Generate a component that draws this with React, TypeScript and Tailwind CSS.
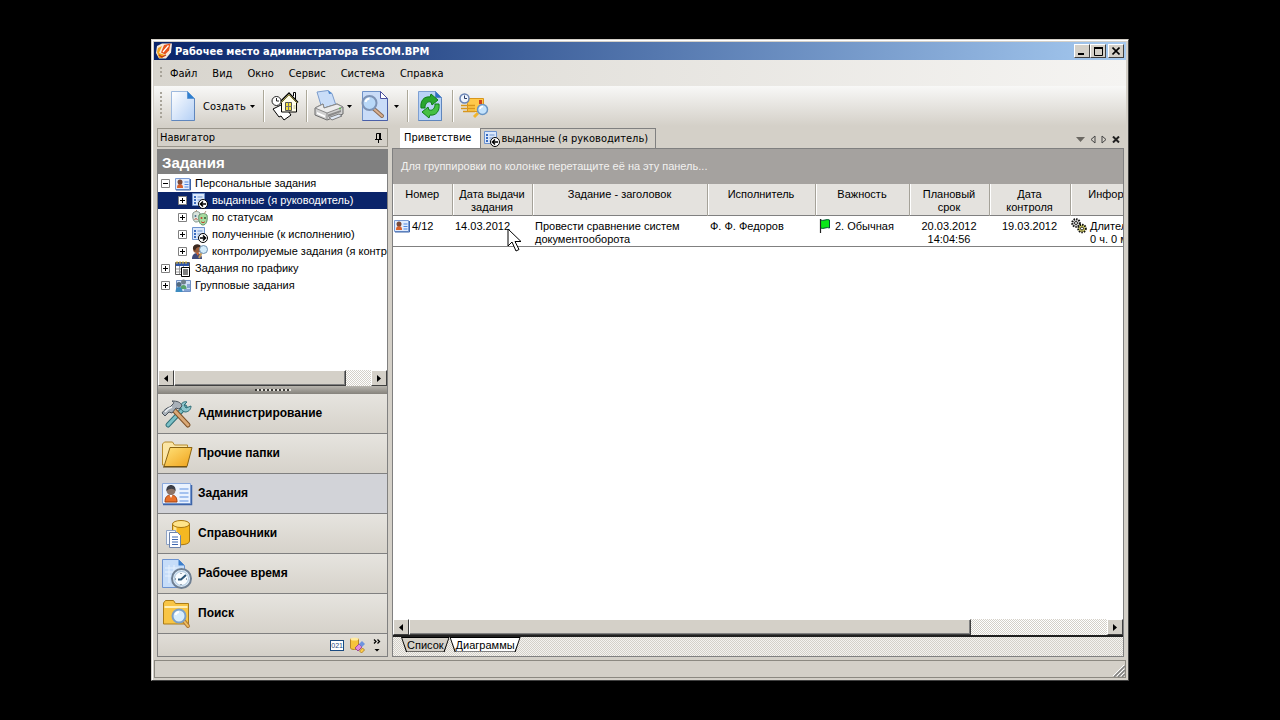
import type { ReactNode } from 'react';

interface IconProps {
  className?: string;
}

const SansText = 'font-["Liberation_Sans",Arial,sans-serif]';

/* ---------- Toolbar icons ---------- */

const AppLogo: React.FC<IconProps> = ({ className }) => (
  <svg className={className} viewBox="0 0 16 16" aria-hidden="true">
    <path d="M1 3l5-2.500h10l-1 9-5 6H3L0 10z" fill="#f7e9dc" />
    <path d="M8 2l6.500-1.500-1.500 7-4 4-4-2z" fill="#e8541c" />
    <path d="M2 5l4-2-3 7 6 2-3 3H3L1 9z" fill="#f2a21c" />
    <path d="M12.500 2.500L7 9" stroke="#fff" strokeWidth="1.200" />
    <path d="M3 12l3 2 4-2" stroke="#c8370f" fill="none" strokeWidth="1.200" />
  </svg>
);

const NewPageIcon: React.FC<IconProps> = ({ className }) => (
  <svg className={className} viewBox="0 0 32 32" aria-hidden="true">
    <defs>
      <linearGradient id="page" x1="0" y1="0" x2="1" y2="1">
        <stop offset="0" stopColor="#ffffff" />
        <stop offset="1" stopColor="#b3cff5" />
      </linearGradient>
    </defs>
    <path d="M4.500 1.500h16l7 7v22h-23z" fill="url(#page)" stroke="#9db9de" />
    <path d="M20.500 1.500v7h7z" fill="#2f7fd0" stroke="#5d97d4" />
    <path d="M4.500 30.500h23v-22" fill="none" stroke="#5f86bd" />
  </svg>
);

const HomeIcon: React.FC<IconProps> = ({ className }) => (
  <svg className={className} viewBox="0 0 28 30" aria-hidden="true">
    <path d="M2 18l10-5 8 11-7 5-3-4-2 1z" fill="#fff" stroke="#000" />
    <path d="M10.500 11.500v9.500h15v-9.500L18 4z" fill="#fffdea" stroke="#000" />
    <path d="M22.500 5V1.500h2V8" fill="#fff" stroke="#000" />
    <path d="M8.500 11.500L18 2l9 9.500" fill="none" stroke="#000" strokeWidth="1.500" />
    <path d="M9.500 12L18 3.800l8.500 8.200" fill="none" stroke="#e8dc5c" strokeWidth="0.800" />
    <path d="M14.500 11.500h6v8h-6z" fill="#f4e13c" stroke="#555" />
    <path d="M17.500 11.500v8M14.500 15.500h6" stroke="#777" />
    <path d="M22.500 14h2v4h-2z" fill="#d8d8b0" />
    <circle cx="5.500" cy="10" r="4.500" fill="#fff" stroke="#222" />
    <path d="M5.500 7v3h2.500" fill="none" stroke="#222" />
  </svg>
);

const PrinterIcon: React.FC<IconProps> = ({ className }) => (
  <svg className={className} viewBox="0 0 32 32" aria-hidden="true">
    <path d="M4 2l11-1.500 4 3 4 12-14 3z" fill="#c9ddf8" stroke="#7c9ccb" />
    <path d="M15 0.500l1 3.500 3-0.500z" fill="#4b87cf" />
    <path d="M2 18l8-4 1 4 13-4 6 3v7l-16 6-12-5z" fill="#d0d0d0" stroke="#6a6a6a" />
    <path d="M2 18l12 5 16-6-6-3-13 4-1-4z" fill="#ececec" stroke="#8a8a8a" />
    <path d="M14 23v7" stroke="#888" />
    <path d="M15 24.500l13-4.500v2l-13 5z" fill="#8b8b8b" />
    <path d="M16 27.500l10-3.500 3 2-10 4z" fill="#dfe8f4" stroke="#7d7d7d" />
    <path d="M4 22l8 3.500v2l-8-3.500z" fill="#fff" />
    <circle cx="27" cy="18.500" r="1" fill="#59b84a" />
  </svg>
);

const PreviewIcon: React.FC<IconProps> = ({ className }) => (
  <svg className={className} viewBox="0 0 32 32" aria-hidden="true">
    <path d="M4.500 1.500h18l7 7v22h-25z" fill="#c9dcf8" stroke="#6f92c8" />
    <path d="M22.500 1.500v7h7z" fill="#fff" stroke="#4a4f9e" />
    <path d="M4.500 30.500h25v-22" fill="none" stroke="#4a5fa8" />
    <path d="M16 19l8 7" stroke="#8a6a53" strokeWidth="4" strokeLinecap="round" />
    <path d="M16 19l8 7" stroke="#d9b090" strokeWidth="2" strokeLinecap="round" />
    <circle cx="11.500" cy="13" r="7" fill="#b9d8f8" stroke="#7d93b6" strokeWidth="2" />
    <path d="M7.500 12a4.500 4.500 0 0 1 4-3.500" fill="none" stroke="#fff" strokeWidth="2" />
  </svg>
);

const RefreshIcon: React.FC<IconProps> = ({ className }) => (
  <svg className={className} viewBox="0 0 26 32" aria-hidden="true">
    <path d="M1.500 1.500h17l6 6v23h-23z" fill="#b9d3f6" stroke="#7d9fd2" />
    <path d="M18.500 1.500v6h6z" fill="#2f72c4" stroke="#5686c6" />
    <path d="M1.500 30.500h23v-22" fill="none" stroke="#5f86bd" />
    <path d="M4 18C3 11 7 6 13 7l1-3 7 6-6 5-1-3c-4-1-6 2-6 6z" fill="#2aa62e" stroke="#0f7d18" />
    <path d="M22 14c1 7-3 12-9 11l-1 3-7-6 6-5 1 3c4 1 6-2 6-6z" fill="#45c043" stroke="#0f7d18" />
  </svg>
);

const MailSearchIcon: React.FC<IconProps> = ({ className }) => (
  <svg className={className} viewBox="0 0 30 26" aria-hidden="true">
    <path d="M9.500 5.500h15v13h-16v-8z" fill="#ffc94a" stroke="#d8961c" />
    <path d="M20 7h3v4h-3z" fill="#d0421c" />
    <path d="M2 12.500h14M2 15.500h14M4 18.500h12" stroke="#d8961c" strokeWidth="1.500" />
    <path d="M19 20l-4 4" stroke="#f0b52e" strokeWidth="3" />
    <circle cx="23.500" cy="16.500" r="5" fill="#c4e2fb" stroke="#6895c4" strokeWidth="1.500" />
    <path d="M21 16a3 3 0 0 1 3-2.500" fill="none" stroke="#fff" strokeWidth="1.500" />
    <circle cx="5.500" cy="5.500" r="4.500" fill="#eef4fd" stroke="#6a84b4" strokeWidth="1.500" />
    <path d="M5.500 2.500v3H8" fill="none" stroke="#2b3d66" />
  </svg>
);

/* ---------- Tree and grid icons ---------- */

const CardIcon: React.FC<IconProps> = ({ className }) => (
  <svg className={className} viewBox="0 0 32 24" aria-hidden="true">
    <path d="M1.500 1.500h28v20h-28z" fill="#eaf2fe" stroke="#8aa9dc" />
    <path d="M2 22.500h28.500V3" fill="none" stroke="#3d64a8" strokeWidth="1.500" />
    <path d="M4 20c0-5 2-7 6-7s6 2 6 7z" fill="#e8702a" stroke="#a3400e" />
    <path d="M8.500 13l1.500 3 1.500-3z" fill="#fff" />
    <circle cx="10" cy="8.500" r="4.500" fill="#8c7468" />
    <path d="M5.500 9c-1-8 10-8 9 0-2-3-6-3-9 0z" fill="#3c3f48" />
    <path d="M18.500 7h9M18.500 11h9M18.500 15h9M18.500 19h9" stroke="#5c8fe0" strokeWidth="1.200" />
  </svg>
);

// Small variant fills the whole 16px square, so it needs coarser details.
const SmallCardIcon: React.FC<IconProps> = ({ className }) => (
  <svg className={className} viewBox="0 0 16 16" aria-hidden="true">
    <path d="M0.500 2.500h14v11h-14z" fill="#e2ecfd" stroke="#7b9bd4" />
    <path d="M1 14h14.500V3" fill="none" stroke="#3d64a8" />
    <path d="M2 12c0-3 1-4 3-4s3 1 3 4z" fill="#d8602a" />
    <circle cx="5" cy="6" r="2.500" fill="#7a4a3a" />
    <path d="M9.500 6h4M9.500 8.500h4M9.500 11h4" stroke="#4f86de" />
  </svg>
);

const ListArrowIcon: React.FC<IconProps & { out?: boolean }> = ({ className, out }) => (
  <svg className={className} viewBox="0 0 16 16" aria-hidden="true">
    <path d="M0.500 0.500h12v12h-12z" fill="#dbe8fb" stroke="#6d93cf" />
    <path d="M2 3h2v2H2zM2 6h2v2H2zM2 9h2v2H2z" fill="#3a6cc0" />
    <path d="M5.500 4h5M5.500 7h4M5.500 10h2" stroke="#6d93cf" />
    <circle cx="11" cy="11" r="4.500" fill="#fff" stroke="#000" />
    {out ? (
      <path d="M8 11h5M11 8.500l2.500 2.500L11 13.500" fill="none" stroke="#000" strokeWidth="1.500" />
    ) : (
      <path d="M14 11H9M11 8.500L8.500 11l2.500 2.500" fill="none" stroke="#000" strokeWidth="1.500" />
    )}
  </svg>
);

const MasksIcon: React.FC<IconProps> = ({ className }) => (
  <svg className={className} viewBox="0 0 16 16" aria-hidden="true">
    <path d="M1 3c2-2 5-2 7 0v5c0 3-2 4-4 4S0 9 1 3z" fill="#d9e4dc" stroke="#7d8f86" />
    <path d="M7 5c3-2 6-2 8 0 1 6-1 10-4 10S6 11 7 5z" fill="#a7dca0" stroke="#5f8f6a" />
    <circle cx="9.500" cy="8" r="1" fill="#c3402c" />
    <circle cx="13" cy="8" r="1" fill="#2c5c34" />
    <path d="M9 11.500c1 1.500 3 1.500 4 0" fill="none" stroke="#c3402c" />
    <circle cx="3.500" cy="6" r="1" fill="#4c6b88" />
    <path d="M2.500 9.500c1-1 2-1 3 0" fill="none" stroke="#c3402c" />
    <path d="M3 2l2-2M12 4l2-3" stroke="#b0917a" />
  </svg>
);

const InspectIcon: React.FC<IconProps> = ({ className }) => (
  <svg className={className} viewBox="0 0 16 16" aria-hidden="true">
    <circle cx="5" cy="5" r="4" fill="#9a5d3c" />
    <path d="M1 5c-1-6 8-6 8-2-3 0-5 0-6 4z" fill="#3b2a22" />
    <path d="M0 15c0-4 2-6 5-6s5 2 5 6z" fill="#3e4a7a" />
    <path d="M4 9l2 3 1-3z" fill="#d9652a" />
    <path d="M9.500 9L7 14" stroke="#c79a58" strokeWidth="2" />
    <circle cx="11.500" cy="5.500" r="4" fill="#d3ecfb" stroke="#6f8fae" />
  </svg>
);

const ScheduleIcon: React.FC<IconProps> = ({ className }) => (
  <svg className={className} viewBox="0 0 16 16" aria-hidden="true">
    <path d="M0.500 1.500h14v12h-14z" fill="#fff" stroke="#555" />
    <path d="M1 2h13v3H1z" fill="#2f55a8" />
    <path d="M2 0v3M5 0v3M8 0v3M11 0v3" stroke="#e8c440" />
    <path d="M1 8h13M1 11h13M4.500 5v8M8.500 5v8" stroke="#9a9a9a" />
    <path d="M6.500 6.500h8v9h-8z" fill="#fff" stroke="#000" />
    <path d="M8 9h5M8 11h5M8 13h5" stroke="#000" />
  </svg>
);

const GroupIcon: React.FC<IconProps> = ({ className }) => (
  <svg className={className} viewBox="0 0 16 16" aria-hidden="true">
    <path d="M1.500 2.500h14v11h-14z" fill="#cfe0f8" stroke="#6f8fc4" />
    <circle cx="8.500" cy="4" r="2.500" fill="#6d7f8c" />
    <path d="M5.500 11c0-3 1-4 3-4s3 1 3 4z" fill="#58a36a" />
    <circle cx="4" cy="6.500" r="2.500" fill="#526a80" />
    <path d="M0.500 14c0-3 1-5 3.500-5s3.500 2 3.500 5z" fill="#3e8cc0" />
    <path d="M12 7h3M12 9h3M9 12h6" stroke="#3f68b0" />
  </svg>
);

const FlagIcon: React.FC<IconProps> = ({ className }) => (
  <svg className={className} viewBox="0 0 12 16" aria-hidden="true">
    <path d="M1.500 10V2c3 1.500 6-1.500 9 0v8c-3-1.500-6 1.500-9 0" fill="#08e818" stroke="#053" />
    <path d="M1.500 1v14" stroke="#222" strokeWidth="1.200" />
  </svg>
);

const GearsIcon: React.FC<IconProps> = ({ className }) => (
  <svg className={className} viewBox="0 0 16 16" aria-hidden="true">
    <circle cx="5" cy="5" r="3.800" fill="#ddd" stroke="#111" strokeWidth="2" strokeDasharray="1.500 1" />
    <circle cx="5" cy="5" r="1.500" fill="#fff" stroke="#222" />
    <circle cx="11" cy="10.500" r="3.800" fill="#e6e070" stroke="#111" strokeWidth="2" strokeDasharray="1.500 1" />
    <circle cx="11" cy="10.500" r="1.500" fill="#fff" stroke="#222" />
  </svg>
);

/* ---------- Navigator icons ---------- */

const ToolsIcon: React.FC<IconProps> = ({ className }) => (
  <svg className={className} viewBox="0 0 32 32" aria-hidden="true">
    <path d="M7 27L24 9" stroke="#2f6f78" strokeWidth="5" strokeLinecap="round" />
    <path d="M7 27L24 9" stroke="#7cc0c6" strokeWidth="3" strokeLinecap="round" />
    <path d="M20 8c0-3 3-5 6-4l-3 3 2 3 5-2c0 4-3 6-6 6-3-1-5-3-4-6z" fill="#8cc5cc" stroke="#2f6f78" />
    <path d="M12 11l15 16" stroke="#7d5127" strokeWidth="5" strokeLinecap="round" />
    <path d="M12 11l15 16" stroke="#d9a876" strokeWidth="3" strokeLinecap="round" />
    <path d="M1 15l3 3 4-4 3 1 4-5 3 1 3-3c-1-4-5-5-10-5 2 1 2 2 1 3L9 9c-2 0-6 3-8 6z" fill="#a9b1b9" stroke="#4b535c" />
    <path d="M4 14c2-3 4-4 7-5" fill="none" stroke="#eef1f4" strokeWidth="1.500" />
  </svg>
);

const FolderIcon: React.FC<IconProps> = ({ className }) => (
  <svg className={className} viewBox="0 0 32 28" aria-hidden="true">
    <defs>
      <linearGradient id="folder" x1="0" y1="0" x2="1" y2="1">
        <stop offset="0" stopColor="#ffe27a" />
        <stop offset="1" stopColor="#f0a21a" />
      </linearGradient>
    </defs>
    <path d="M1.500 25V4l2-2h8l2 3h13v20z" fill="#fbe6a6" stroke="#b58a2c" />
    <path d="M3 26.500L9 7.500h22l-5 19z" fill="url(#folder)" stroke="#8a6414" />
    <path d="M2 27h24" stroke="#5f450f" />
  </svg>
);

const CatalogIcon: React.FC<IconProps> = ({ className }) => (
  <svg className={className} viewBox="0 0 32 32" aria-hidden="true">
    <path d="M11.500 6v17c0 5 17 5 17 0V6z" fill="#f5b822" stroke="#a97710" />
    <path d="M14 8v18" stroke="#ffe796" strokeWidth="3" />
    <ellipse cx="20" cy="6" rx="8.500" ry="3.500" fill="#ffe48a" stroke="#a97710" />
    <path d="M5.500 12.500h9v14h-9z" fill="#f5f8fd" stroke="#8fa3c4" />
    <path d="M8.500 14.500h8l3 3v12h-11z" fill="#fff" stroke="#6c83ac" />
    <path d="M11 19h6M11 21.500h6M11 24h6M11 26.500h6" stroke="#3f68b0" />
  </svg>
);

const WorkTimeIcon: React.FC<IconProps> = ({ className }) => (
  <svg className={className} viewBox="0 0 32 32" aria-hidden="true">
    <path d="M1.500 1.500h16l6 6v22h-22z" fill="#c6ddf9" stroke="#6d93cf" />
    <path d="M17.500 1.500v6h6z" fill="#3c7fcc" />
    <path d="M4 10h14M4 14h10M4 18h6M8 7v18M13 7v6" stroke="#e6f1fd" />
    <circle cx="20.500" cy="20.500" r="9.500" fill="#dcebf8" stroke="#6f7f92" strokeWidth="2" />
    <circle cx="20.500" cy="20.500" r="7" fill="#f8fcff" stroke="#a9c4dd" />
    <path d="M25 17l-5 4.500h-3" fill="none" stroke="#2c5678" strokeWidth="2" />
    <path d="M20 15v1M20 26v1M14 21h1M25 21h1" stroke="#44566a" />
  </svg>
);

const SearchFolderIcon: React.FC<IconProps> = ({ className }) => (
  <svg className={className} viewBox="0 0 32 30" aria-hidden="true">
    <path d="M2.500 25V4l2-2.500h8l2 3h13V25z" fill="#f8c545" stroke="#a97b18" />
    <path d="M3.500 8h23" stroke="#ffeeb5" strokeWidth="2" />
    <path d="M23 22l4 5" stroke="#b07a3a" strokeWidth="4" strokeLinecap="round" />
    <path d="M23 22l4 5" stroke="#f0c060" strokeWidth="2" strokeLinecap="round" />
    <circle cx="18" cy="17" r="6.500" fill="#d7edfc" stroke="#7ba0c8" strokeWidth="2" />
    <path d="M14.500 16a4 4 0 0 1 3.500-3" fill="none" stroke="#fff" strokeWidth="2" />
  </svg>
);

const CleanupIcon: React.FC<IconProps> = ({ className }) => (
  <svg className={className} viewBox="0 0 16 16" aria-hidden="true">
    <path d="M1.500 2v9c0 2 8 2 8 0V2z" fill="#f6c33a" stroke="#b8872a" />
    <ellipse cx="5.500" cy="2" rx="4" ry="1.500" fill="#ffeaa0" />
    <path d="M6 11l4-4 3 3-4 4z" fill="#e08ad8" stroke="#a04a98" />
    <path d="M10 7l3-3 3 3-3 3z" fill="#6d93e0" />
    <path d="M10.500 14l3-3 2 2-3 3z" fill="#ffcf4a" stroke="#b8872a" />
  </svg>
);

/* ---------- Small parts ---------- */

const DropArrow: React.FC<IconProps> = ({ className }) => (
  <svg className={`h-[3px] w-[5px] ${className ?? ''}`} viewBox="0 0 5 3" aria-hidden="true">
    <path d="M0 0h5L2.500 3z" fill="#000" />
  </svg>
);

const Separator = () => <span className="h-8 w-px bg-[#aca899] shadow-[1px_0_0_#fff]" />;

const Grip: React.FC<{ className: string }> = ({ className }) => (
  <span
    className={`w-[2px] bg-[repeating-linear-gradient(180deg,#a8a49a_0_2px,transparent_2px_4px)] ${className}`}
  />
);

interface ScrollBarProps {
  label: string;
  thumb: string;
}

const ScrollBar: React.FC<ScrollBarProps> = ({ label, thumb }) => {
  const button =
    'flex h-4 w-4 shrink-0 items-center justify-center border border-t-white border-l-white border-r-[#404040] border-b-[#404040] bg-[#d4d0c8]';
  return (
    <div
      aria-label={label}
      className="flex h-4 shrink-0 bg-[repeating-conic-gradient(#ffffff_0_25%,#d4d0c8_0_50%)] bg-[size:2px_2px]"
    >
      <button className={button} aria-label={`${label}: влево`}>
        <svg className="h-[7px] w-1" viewBox="0 0 4 7" aria-hidden="true">
          <path d="M4 0v7L0 3.500z" />
        </svg>
      </button>
      <div className="min-w-0 flex-1">
        <div
          className={`h-4 border border-t-white border-l-white border-r-[#404040] border-b-[#404040] bg-[#d4d0c8] shadow-[inset_-1px_-1px_0_#808080] ${thumb}`}
        />
      </div>
      <button className={button} aria-label={`${label}: вправо`}>
        <svg className="h-[7px] w-1" viewBox="0 0 4 7" aria-hidden="true">
          <path d="M0 0v7l4-3.500z" />
        </svg>
      </button>
    </div>
  );
};

/* ---------- Window sections ---------- */

const captionButton =
  'flex h-[14px] w-4 items-center justify-center border border-t-white border-l-white border-r-[#404040] border-b-[#404040] bg-[#d4d0c8]';

const TitleBar = () => (
  <header className="flex h-[18px] shrink-0 items-center bg-linear-to-r from-[#0a246a] to-[#a6caf0] px-[2px]">
    <AppLogo className="h-4 w-4" />
    <h1 className="ml-[3px] flex-1 text-[11px] font-bold whitespace-nowrap text-white">
      Рабочее место администратора ESCOM.BPM
    </h1>
    <button className={captionButton} aria-label="Свернуть">
      <svg className="h-2 w-2" viewBox="0 0 8 8" aria-hidden="true">
        <path d="M0 6h6v2H0z" />
      </svg>
    </button>
    <button className={captionButton} aria-label="Развернуть">
      <svg className="h-[9px] w-[9px]" viewBox="0 0 9 9" aria-hidden="true">
        <path d="M0.500 1.500h8v7h-8zM0 1h9" fill="none" stroke="#000" />
        <path d="M0 0h9v2H0z" />
      </svg>
    </button>
    <button className={`${captionButton} ml-[2px]`} aria-label="Закрыть">
      <svg className="h-2 w-2" viewBox="0 0 8 8" aria-hidden="true">
        <path d="M0.500 0.500l7 7M7.500 0.500l-7 7" stroke="#000" strokeWidth="1.600" />
      </svg>
    </button>
  </header>
);

const menuItems = ['Файл', 'Вид', 'Окно', 'Сервис', 'Система', 'Справка'];

const MenuBar = () => (
  <nav className="flex h-[26px] shrink-0 items-center bg-linear-to-r from-[#d8d5ce] to-[#f5f4f2] pl-[6px]">
    <Grip className="mr-2 h-3" />
    <div className="flex gap-[15px]">
      {menuItems.map((item) => (
        <button key={item}>{item}</button>
      ))}
    </div>
  </nav>
);

const Toolbar = () => (
  <div className="flex h-10 shrink-0 items-center bg-linear-to-b from-[#f8f8f7] to-[#d4d0c8] pl-[6px]">
    <Grip className="mr-[5px] h-7" />
    <button className="flex items-center">
      <NewPageIcon className="mr-1 h-8 w-8" />
      Создать
      <DropArrow className="ml-1" />
    </button>
    <span className="w-2" />
    <Separator />
    <button className="mx-[7px]" aria-label="Домой">
      <HomeIcon className="h-[30px] w-7" />
    </button>
    <Separator />
    <button className="ml-[6px] flex items-center" aria-label="Печать">
      <PrinterIcon className="h-8 w-8" />
      <DropArrow className="ml-[2px]" />
    </button>
    <button className="ml-[6px] flex items-center" aria-label="Просмотр">
      <PreviewIcon className="h-8 w-8" />
      <DropArrow className="ml-1" />
    </button>
    <span className="w-2" />
    <Separator />
    <button className="mx-[9px]" aria-label="Обновить">
      <RefreshIcon className="h-8 w-[26px]" />
    </button>
    <Separator />
    <button className="ml-[6px]" aria-label="Поиск писем">
      <MailSearchIcon className="h-[26px] w-[30px]" />
    </button>
  </div>
);

interface TreeNodeProps {
  icon: ReactNode;
  label: string;
  nested?: boolean;
  open?: boolean;
  selected?: boolean;
}

const TreeNode: React.FC<TreeNodeProps> = ({ icon, label, nested, open, selected }) => (
  <li
    className={`flex h-[17px] items-center ${nested ? 'pl-5' : 'pl-[3px]'} ${
      selected ? 'bg-[#0a246a] text-white' : ''
    }`}
  >
    <svg className="mr-[5px] h-[9px] w-[9px] shrink-0" viewBox="0 0 9 9" aria-hidden="true">
      <path d="M0.500 0.500h8v8h-8z" fill="#fff" stroke="#808080" />
      <path d={open ? 'M2 4.500h5' : 'M2 4.500h5M4.500 2v5'} stroke="#000" />
    </svg>
    {icon}
    <span className="ml-1 whitespace-nowrap">{label}</span>
  </li>
);

const treeIcon = 'h-4 w-4 shrink-0';

const TaskTree = () => (
  <ul className={`min-h-0 flex-1 overflow-hidden bg-white pt-px text-[11px] ${SansText}`}>
    <TreeNode icon={<SmallCardIcon className={treeIcon} />} label="Персональные задания" open />
    <TreeNode icon={<ListArrowIcon className={treeIcon} />} label="выданные (я руководитель)" nested selected />
    <TreeNode icon={<MasksIcon className={treeIcon} />} label="по статусам" nested />
    <TreeNode icon={<ListArrowIcon className={treeIcon} out />} label="полученные (к исполнению)" nested />
    <TreeNode icon={<InspectIcon className={treeIcon} />} label="контролируемые задания (я контролёр)" nested />
    <TreeNode icon={<ScheduleIcon className={treeIcon} />} label="Задания по графику" />
    <TreeNode icon={<GroupIcon className={treeIcon} />} label="Групповые задания" />
  </ul>
);

const sectionIcon = 'h-8 w-8';

const sections = [
  { label: 'Администрирование', icon: <ToolsIcon className={sectionIcon} /> },
  { label: 'Прочие папки', icon: <FolderIcon className={sectionIcon} /> },
  { label: 'Задания', icon: <CardIcon className={sectionIcon} />, active: true },
  { label: 'Справочники', icon: <CatalogIcon className={sectionIcon} /> },
  { label: 'Рабочее время', icon: <WorkTimeIcon className={sectionIcon} /> },
  { label: 'Поиск', icon: <SearchFolderIcon className={sectionIcon} /> },
];

const Navigator = () => (
  <aside className="flex w-[231px] shrink-0 flex-col">
    <div className="mb-[2px] flex h-[19px] shrink-0 items-center justify-between border border-[#9a968c] pr-[5px] pl-[2px]">
      <h2>Навигатор</h2>
      <button aria-label="Закрепить">
        <svg className="h-[10px] w-[7px]" viewBox="0 0 7 10" aria-hidden="true">
          <path d="M1.500 6V0.500h4V6M0 6.500h7M3.500 7v3" fill="none" stroke="#000" />
          <path d="M4 0h2v6H4z" />
        </svg>
      </button>
    </div>

    <div className="flex min-h-0 flex-1 flex-col border border-[#808080]">
      <h3 className={`flex h-6 shrink-0 items-center bg-[#808080] pl-1 text-[15px] font-bold text-white ${SansText}`}>
        Задания
      </h3>
      <TaskTree />
      <ScrollBar label="Дерево заданий" thumb="w-[172px] max-w-full" />

      <div className="flex h-2 shrink-0 items-center justify-center bg-linear-to-b from-[#b8b5ae] to-[#85827c]">
        <span className="h-[2px] w-9 bg-[repeating-linear-gradient(90deg,#3c3a36_0_2px,#e4e2dc_2px_4px)]" />
      </div>

      {sections.map(({ label, icon, active }) => (
        <button
          key={label}
          className={`flex h-10 shrink-0 items-center gap-[5px] border-b border-[#808080] pl-[3px] text-left text-[12px] font-bold ${SansText} ${
            active ? 'bg-[#d2d3d8]' : 'bg-linear-to-b from-[#e6e4df] to-[#d6d2ca]'
          }`}
        >
          {icon}
          <span>{label}</span>
        </button>
      ))}

      <div className="flex h-[22px] shrink-0 items-center justify-end bg-linear-to-b from-[#e0ddd7] to-[#d4d0c8] pr-[6px]">
        <button
          className={`h-[11px] border border-[#1a4a80] bg-white text-[7px] leading-[9px] text-[#1a4a80] ${SansText}`}
        >
          021
        </button>
        <button className="ml-[5px]" aria-label="Очистка">
          <CleanupIcon className="h-4 w-4" />
        </button>
        <button className="ml-2" aria-label="Другие кнопки">
          <svg className="h-[13px] w-2" viewBox="0 0 8 13" aria-hidden="true">
            <path d="M1 0.500l2 2-2 2M4.500 0.500l2 2-2 2" fill="none" stroke="#000" strokeWidth="1.300" />
            <path d="M1.500 10h5L4 12.500z" />
          </svg>
        </button>
      </div>
    </div>
  </aside>
);

const DocumentTabs = () => (
  <div className="flex h-5 shrink-0 items-end pr-1 pl-2">
    <button className="h-5 bg-white pr-[9px] pb-px pl-1">Приветствие</button>
    <button className="flex h-5 items-center border border-b-0 border-[#808080] bg-[#d4d0c8] pr-[7px] pl-[3px]">
      <ListArrowIcon className="mr-px h-4 w-4" />
      выданные (я руководитель)
    </button>
    <div className="mb-1 ml-auto flex items-center gap-[5px]">
      <button aria-label="Список вкладок">
        <svg className="h-[5px] w-[9px]" viewBox="0 0 9 5" aria-hidden="true">
          <path d="M0 0h9L4.500 5z" fill="#6b6862" />
        </svg>
      </button>
      <button aria-label="Предыдущая вкладка">
        <svg className="h-[9px] w-[6px]" viewBox="0 0 6 9" aria-hidden="true">
          <path d="M5 1v7L1 4.500z" fill="none" stroke="#444" />
        </svg>
      </button>
      <button aria-label="Следующая вкладка">
        <svg className="h-[9px] w-[6px]" viewBox="0 0 6 9" aria-hidden="true">
          <path d="M1 1v7l4-3.500z" fill="none" stroke="#444" />
        </svg>
      </button>
      <button aria-label="Закрыть вкладку">
        <svg className="h-[7px] w-2" viewBox="0 0 8 7" aria-hidden="true">
          <path d="M1 0.500l6 6M7 0.500l-6 6" stroke="#222" strokeWidth="2" />
        </svg>
      </button>
    </div>
  </div>
);

const Pointer = () => (
  <svg className="absolute top-3 left-[55px] z-10 h-6 w-4" viewBox="0 0 16 24" aria-hidden="true">
    <path d="M1 1v17l4-4 4 9 3-1.500-4-8h6z" fill="#fff" stroke="#000" />
  </svg>
);

const columns = [
  { title: 'Номер', width: 'w-[59px]' },
  { title: 'Дата выдачи задания', width: 'w-[80px]' },
  { title: 'Задание - заголовок', width: 'w-[175px]' },
  { title: 'Исполнитель', width: 'w-[108px]' },
  { title: 'Важность', width: 'w-[94px]' },
  { title: 'Плановый срок', width: 'w-[80px]' },
  { title: 'Дата контроля', width: 'w-[81px]' },
  { title: 'Информация', width: 'w-[104px]' },
];

const TaskGrid = () => (
  <div className="min-h-0 flex-1 overflow-hidden bg-white">
    <table className={`w-[781px] table-fixed border-collapse text-[11px] leading-[13px] ${SansText}`}>
      <thead>
        <tr className="h-[31px] border-b border-[#808080] bg-[#e4e2de] align-top">
          {columns.map(({ title, width }) => (
            <th
              key={title}
              className={`border-r border-[#a5a299] px-1 pt-1 font-normal shadow-[inset_1px_0_0_#fff] ${width}`}
            >
              {title}
            </th>
          ))}
        </tr>
      </thead>
      <tbody>
        <tr className="h-[31px] border-b border-[#808080] align-top">
          <td className="pt-1 pl-px">
            <span className="flex items-center gap-[2px]">
              <SmallCardIcon className="-my-1 h-4 w-4" />
              4/12
            </span>
          </td>
          <td className="relative pt-1 pl-[3px]">
            14.03.2012
            <Pointer />
          </td>
          <td className="pt-1 pl-[3px]">Провести сравнение систем документооборота</td>
          <td className="pt-1 pl-[3px]">Ф. Ф. Федоров</td>
          <td className="pt-1 pl-1">
            <span className="flex items-center gap-1">
              <FlagIcon className="-my-1 h-4 w-3" />
              2. Обычная
            </span>
          </td>
          <td className="px-2 pt-1 text-center">20.03.2012 14:04:56</td>
          <td className="pt-1 text-center">19.03.2012</td>
          <td className="pt-1 pl-px">
            <span className="flex items-start gap-[3px] whitespace-nowrap">
              <GearsIcon className="-mt-[2px] h-4 w-4 shrink-0" />
              <span>
                Длительность:
                <br />0 ч. 0 мин.
              </span>
            </span>
          </td>
        </tr>
      </tbody>
    </table>
  </div>
);

const SheetTabs = () => (
  <div
    className={`flex h-[21px] shrink-0 items-start border-t-2 border-[#202020] bg-[repeating-conic-gradient(#f4f3f0_0_25%,#d4d0c8_0_50%)] bg-[size:2px_2px] pl-2 text-[11px] ${SansText}`}
  >
    <button className="h-[15px] bg-black [clip-path:polygon(0_0,100%_0,calc(100%_-_5px)_100%,5px_100%)]">
      <span className="block h-[14px] bg-[#d4d0c8] px-[6px] leading-[14px] [clip-path:polygon(1px_0,calc(100%_-_1px)_0,calc(100%_-_6px)_100%,6px_100%)]">
        Список
      </span>
    </button>
    <button className="h-[15px] bg-black [clip-path:polygon(0_0,100%_0,calc(100%_-_5px)_100%,5px_100%)]">
      <span className="block h-[14px] bg-white px-[6px] leading-[14px] [clip-path:polygon(1px_0,calc(100%_-_1px)_0,calc(100%_-_6px)_100%,6px_100%)]">
        Диаграммы
      </span>
    </button>
  </div>
);

const Workspace = () => (
  <main className="flex min-w-0 flex-1 flex-col">
    <DocumentTabs />
    <div className="flex min-h-0 flex-1 flex-col border border-[#808080]">
      <p className={`flex h-[35px] shrink-0 items-center bg-[#a5a29f] pl-2 text-[11px] text-[#f2f1ef] ${SansText}`}>
        Для группировки по колонке перетащите её на эту панель...
      </p>
      <TaskGrid />
      <ScrollBar label="Список заданий" thumb="w-[562px] max-w-full" />
      <SheetTabs />
    </div>
  </main>
);

const StatusBar = () => (
  <footer className="mt-[3px] flex h-[18px] shrink-0 items-end justify-end border border-[#8c8981]">
    <svg className="h-3 w-3" viewBox="0 0 12 12" aria-hidden="true">
      <path d="M1 12L12 1M5 12l7-7M9 12l3-3" stroke="#808080" strokeWidth="1.500" />
      <path d="M0 11L11 0M4 11l7-7M8 11l3-3" stroke="#fff" />
    </svg>
  </footer>
);

const App = () => (
  <div className='flex h-screen bg-black px-[151px] py-[39px] font-["DejaVu_Sans_Condensed","DejaVu_Sans",Tahoma,sans-serif] text-[11px] leading-[13px] text-black'>
    <div className="flex min-w-0 flex-1 flex-col border border-t-[#d4d0c8] border-r-[#404040] border-b-[#404040] border-l-[#d4d0c8] bg-[#d4d0c8] p-[2px] shadow-[inset_1px_1px_0_#fff]">
      <TitleBar />
      <MenuBar />
      <Toolbar />
      <div className="flex min-h-0 flex-1 gap-1 pt-[2px] pr-[2px] pl-[3px]">
        <Navigator />
        <Workspace />
      </div>
      <StatusBar />
    </div>
  </div>
);

export default App;
